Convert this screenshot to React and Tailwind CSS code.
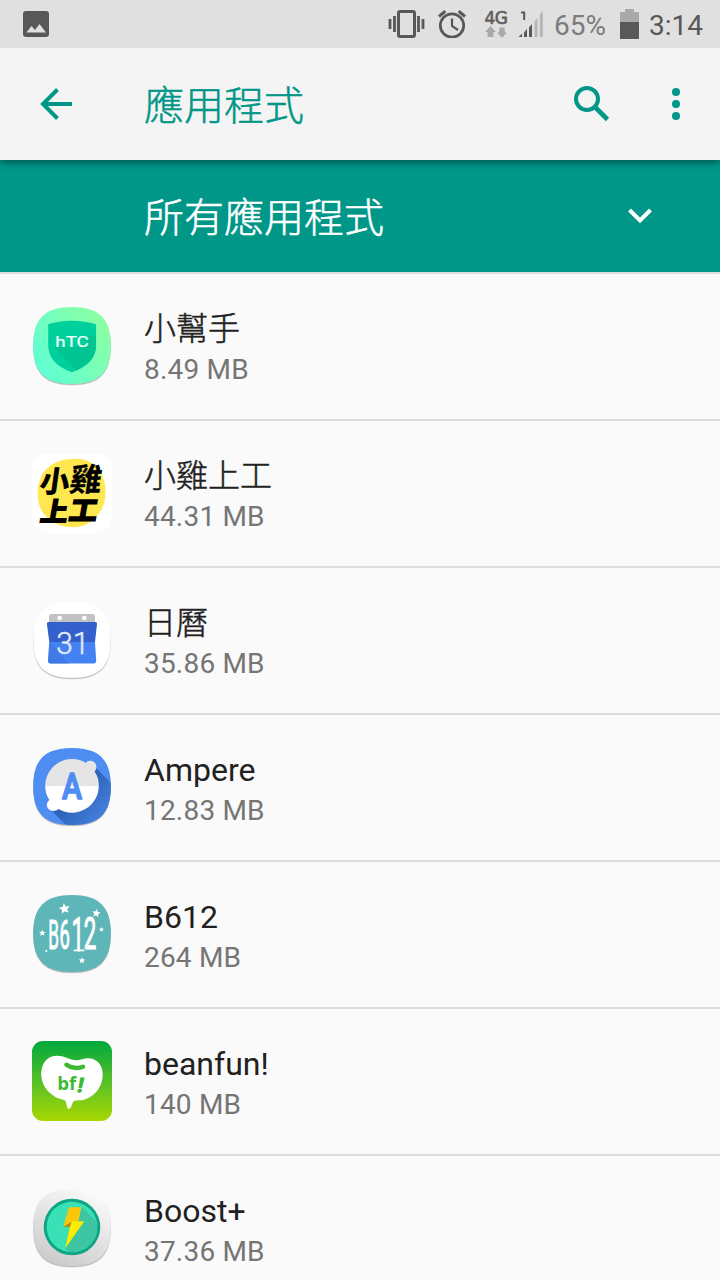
const SQUIRCLE = 'M40 1C67 1 78.8 12.5 78.8 39.5S67 78 40 78 1.2 66.5 1.2 39.5 13 1 40 1Z';
const STAR = 'M0-5 1.4-1.8 5-1.6 2.3.8 3.1 4.2 0 2.3-3.1 4.2-2.3.8-5-1.6-1.4-1.8Z';

function Squircle({ fill, children }) {
  return (
    <svg viewBox="0 0 80 80" className="h-20 w-20">
      <path d={SQUIRCLE} fill="#000" opacity="0.06" transform="translate(0 1.8)" />
      <path d={SQUIRCLE} fill="#000" opacity="0.22" transform="translate(0 .9)" />
      <path d={SQUIRCLE} fill={fill} />
      {children}
    </svg>
  );
}

function HelperIcon() {
  return (
    <Squircle fill="url(#helper)">
      <defs>
        <linearGradient id="helper" x1="0" y1=".85" x2="1" y2=".15">
          <stop offset="0" stopColor="#5cffd6" />
          <stop offset="1" stopColor="#8effa0" />
        </linearGradient>
        <clipPath id="shield">
          <path d="M39.8 14.7C48 14.7 57 16 64 18.2V39C64 53 54 61 39.8 66.3 25.6 61 16.2 53 16.2 39V18.2C23 16 31.5 14.7 39.8 14.7Z" />
        </clipPath>
      </defs>
      <g clipPath="url(#shield)">
        <path d="M10 10h60v60H10z" fill="#00d09c" />
        <path d="M22 41 50 70H70V30L56 30 56 41Z" fill="#00c492" />
      </g>
      <text x="23.3" y="41" textLength="33.5" lengthAdjust="spacingAndGlyphs" fill="#f2fffb" stroke="#f2fffb" strokeWidth=".2" className="font-[Roboto,sans-serif] text-[15px]">hTC</text>
    </Squircle>
  );
}

function ChickenIcon() {
  return (
    <svg viewBox="0 0 80 80" className="h-20 w-20">
      <rect width="80" height="80" rx="16" fill="#fff" />
      <path d="M40 6C52 5 64 9 70 22 75 34 75 48 68 59 61 70 50 75 39 74 25 74 13 66 8 54 4 42 5 29 12 19 19 10 29 6 40 6Z" fill="#ffe74f" />
      <g className="font-['Noto_Sans_CJK_TC',sans-serif] font-bold" fill="#000" stroke="#000" strokeWidth=".9">
        <text transform="translate(7 38.5) skewX(-8)" fontSize="29">小</text>
        <text transform="translate(36.5 38) skewX(-8)" fontSize="32" strokeWidth=".3">雞</text>
        <text transform="translate(7.5 67.5) skewX(-10) scale(1 .95)" fontSize="27" strokeWidth="2">上</text>
        <text transform="translate(36 67) skewX(-10) scale(1 .95)" fontSize="28" strokeWidth="2">工</text>
      </g>
    </svg>
  );
}

function CalendarIcon() {
  return (
    <Squircle fill="#fff">
      <path d="M17 23V17Q17 14 20 14H60Q63 14 63 17V23Z" fill="#c2c2c2" />
      <circle cx="27.7" cy="18" r="2.2" fill="#fff" />
      <circle cx="52.3" cy="18" r="2.2" fill="#fff" />
      <path d="M16.5 22H63.5Q65.3 22 65 24L63 42H17.3L14.9 24Q14.8 22 16.5 22Z" fill="#3460ce" />
      <path d="M17.3 42H63L64.2 61Q64.2 63.4 62 63.4H18Q16 63.4 16 61Z" fill="#4482f2" />
      <path d="M17.3 42 37 63.4H18Q16 63.4 16 61Z" fill="#3d74e0" opacity=".6" />
      <text x="24.3" y="53.5" textLength="33" lengthAdjust="spacingAndGlyphs" fill="#e3ebfa" stroke="#e3ebfa" strokeWidth=".5" className="font-[Roboto,sans-serif] text-[31px] font-light">31</text>
    </Squircle>
  );
}

function AmpereIcon() {
  return (
    <Squircle fill="#4e8df1">
      <defs>
        <linearGradient id="cast" x1=".4" y1=".4" x2=".88" y2=".8">
          <stop offset="0" stopColor="#2f65b8" />
          <stop offset="1" stopColor="#4c8aee" />
        </linearGradient>
        <clipPath id="ampere"><path d={SQUIRCLE} /></clipPath>
      </defs>
      <path d="M63 20 90 47V90H46L18 62 40 40Z" fill="url(#cast)" clipPath="url(#ampere)" />
      <path d="M13.2 39A26.8 26.8 0 0 1 54 16C55 13.5 60 13 62.5 15.5 65 18 65 22 62.5 24.5 66 29 66.8 34 66.8 39Z" fill="#e5e5e5" />
      <path d="M66.8 39A26.8 26.8 0 0 1 26.5 62C24 64.5 19 64.5 16.5 62 14 59.5 14.5 55 17.5 53 14.5 49 13.2 44 13.2 39Z" fill="#fff" />
      <text x="30" y="52.3" textLength="20" lengthAdjust="spacingAndGlyphs" fill="#4e8df1" stroke="#4e8df1" strokeWidth="1.6" strokeLinejoin="round" className="font-[Roboto,sans-serif] text-[37px] font-medium">A</text>
    </Squircle>
  );
}

function B612Icon() {
  return (
    <Squircle fill="#5eb6b9">
      <g fill="#fff" stroke="#fff" strokeWidth="1" strokeLinejoin="round" className="font-[Roboto,sans-serif] text-[40px]">
        <text transform="translate(16.3 54.5) scale(.43 1)">B</text>
        <text transform="translate(27.5 54.5) scale(.46 1)">6</text>
        <text transform="translate(39.5 56.5) scale(.56 1.2)">1</text>
        <text transform="translate(51.7 55.2) scale(.56 1.12)">2</text>
      </g>
      <path d="M42.5 56.4h9" stroke="#fff" strokeWidth="1.8" strokeLinecap="round" />
      <g fill="#fff">
        <path d={STAR} transform="translate(32.5 14.7) rotate(-8) scale(1.1)" />
        <path d={STAR} transform="translate(64.3 19.3) rotate(8) scale(.85)" />
        <path d={STAR} transform="translate(10.3 39) scale(.65)" />
        <path d={STAR} transform="translate(69.5 35.5) scale(.5)" />
        <path d={STAR} transform="translate(50 66.5) scale(.65)" />
        <circle cx="14.3" cy="57" r="1.1" />
      </g>
    </Squircle>
  );
}

function BeanfunIcon() {
  return (
    <svg viewBox="0 0 80 80" className="h-20 w-20">
      <defs>
        <linearGradient id="bean" x1="0" y1="0" x2="0" y2="1">
          <stop offset="0" stopColor="#00a83c" />
          <stop offset=".5" stopColor="#55c02a" />
          <stop offset="1" stopColor="#a9d800" />
        </linearGradient>
      </defs>
      <rect width="80" height="80" rx="11" fill="url(#bean)" />
      <path d="M24 14.8C32 14.5 37 18.5 43 19.3 48 19.8 51 17 57 17.2 66 18 71 25 70.7 34 70.5 47 61 57 50 59.3 45 59.5 42 59 40.5 62 39.5 65 38.5 68 36.5 68 34.5 67 34.8 61.5 33 59.5 31 58 27 58.5 22 55 14 50 9.3 42 9.2 33 9.5 22 15 15.5 24 14.8Z" fill="#fff" />
      <path d="M34.5 23.8C39 27.5 47 27.5 51 25.8" fill="none" stroke="#3cb933" strokeWidth="4.5" strokeLinecap="round" />
      <g fill="#3cb933" className="font-['Open_Sans',sans-serif] font-bold">
        <text x="25.3" y="49.2" textLength="19" lengthAdjust="spacingAndGlyphs" className="text-[17px]">bf</text>
        <text transform="translate(44.5 50.5) skewX(-12)" stroke="#3cb933" strokeWidth="1" className="text-[19.5px]">!</text>
      </g>
    </svg>
  );
}

function BoostIcon() {
  return (
    <Squircle fill="url(#boost)">
      <defs>
        <linearGradient id="boost" x1=".75" y1="0" x2=".25" y2="1">
          <stop offset="0" stopColor="#fbfbfb" />
          <stop offset="1" stopColor="#cacaca" />
        </linearGradient>
        <clipPath id="disc"><circle cx="40" cy="39" r="25" /></clipPath>
      </defs>
      <circle cx="40" cy="39" r="28.3" fill="#10a683" />
      <circle cx="40" cy="39" r="25.3" fill="#38e2b6" />
      <path d="M50 19 80 49V80H52L33 60 45 36Z" fill="#3ec5a1" clipPath="url(#disc)" />
      <path d="M31.3 38.7 40 33.3 38 39Z" fill="#b58a10" />
      <path d="M37 19.2H49.3L46.3 33.8H39.8L31.3 38.7Z" fill="#fdc60a" />
      <path d="M40 33.3H52.3L33.3 60.3 37.8 39Z" fill="#ffea00" />
    </Squircle>
  );
}

const apps = [
  { name: '小幫手', size: '8.49 MB', Icon: HelperIcon, cjk: true },
  { name: '小雞上工', size: '44.31 MB', Icon: ChickenIcon, cjk: true },
  { name: '日曆', size: '35.86 MB', Icon: CalendarIcon, cjk: true },
  { name: 'Ampere', size: '12.83 MB', Icon: AmpereIcon },
  { name: 'B612', size: '264 MB', Icon: B612Icon },
  { name: 'beanfun!', size: '140 MB', Icon: BeanfunIcon },
  { name: 'Boost+', size: '37.36 MB', Icon: BoostIcon },
];

function StatusBar() {
  return (
    <div className="relative z-20 flex h-12 shrink-0 items-center bg-[#e0e0e0] pr-[17px] pl-[23px] text-[#585858]">
      <svg viewBox="0 0 26 26" className="h-[26px] w-[26px]">
        <rect width="26" height="26" rx="3" fill="currentColor" />
        <path d="M3.5 21.5 8.5 15 12 19 16.5 13 23 21.5Z" fill="#e0e0e0" />
      </svg>
      <div className="ml-auto flex items-center">
        {/* Vibrate */}
        <svg viewBox="0 0 38 28" className="h-7 w-[38px]" fill="none" stroke="currentColor" strokeWidth="3">
          <rect x="10.5" y="1.5" width="16" height="25" rx="1.5" />
          <path d="M2 9V19M6.5 6V22M30.5 6V22M35 9V19" strokeWidth="2.8" />
        </svg>
        {/* Alarm */}
        <svg viewBox="0 0 28 28" className="ml-3 h-7 w-7" fill="none" stroke="currentColor" strokeWidth="2.7">
          <circle cx="14" cy="15.5" r="11.7" />
          <path d="M14 8.5V16L20 20" strokeWidth="2.2" />
          <path d="M1 6.5 7.3 1.2M27 6.5 20.7 1.2" strokeWidth="3" />
        </svg>
        {/* Mobile network */}
        <div className="ml-[18px] flex w-6 flex-col items-center pt-px">
          <span className="font-['DejaVu_Sans',sans-serif] text-[17px] leading-[15px] tracking-[-0.5px] [-webkit-text-stroke:0.7px_#686868]">4G</span>
          <svg viewBox="0 0 22 12" className="h-3 w-[22px]" fill="#a9a9a9">
            <path d="M5.5 0 11 6H8.5V11H2.5V6H0ZM17 12 12 6.5H14.3V1.5H19.7V6.5H22Z" />
          </svg>
        </div>
        <svg viewBox="0 0 26 28" className="ml-[10px] h-7 w-[26px]">
          <path d="M.5 27 4 23.5V27ZM6 22.5 9 19V27H6ZM11 17.5 14 14V27H11Z" fill="currentColor" />
          <path d="M16.5 11.5 19.5 8V27H16.5ZM21.8 4.500 24.800 1V27H21.800Z" fill="#b5b5b5" />
          <path d="M3 2.5H6.2V10" fill="none" stroke="currentColor" strokeWidth="2" />
        </svg>
        <span className="ml-[10px] w-[52px] pt-[3px] text-[28px] leading-none whitespace-nowrap text-[#7b7b7b]">65%</span>
        <svg viewBox="0 0 19 30" className="ml-[14px] h-[30px] w-[19px]">
          <path d="M0 3H5V0H14V3H19V14H0Z" fill="#a9a9a9" />
          <path d="M0 13H19V30H0Z" fill="currentColor" />
        </svg>
        <span className="ml-[10px] pt-[3px] text-[28px] leading-none">3:14</span>
      </div>
    </div>
  );
}

export default function App() {
  return (
    <div className="flex h-[1280px] w-[720px] flex-col overflow-hidden bg-[#fafafa] font-[Roboto,'Noto_Sans_CJK_TC',sans-serif]">
      <StatusBar />

      {/* Toolbar */}
      <header className="relative z-10 flex h-28 shrink-0 items-center bg-[#f4f4f4] pr-10 pl-10 text-[#009688] shadow-[0_2px_8px_rgba(0,0,0,0.45)]">
        <svg viewBox="0 0 32 32" className="h-8 w-8" fill="none" stroke="currentColor" strokeWidth="4">
          <path d="M32 16H3M17.5 1.5 3 16 17.5 30.5" />
        </svg>
        <h1 className="ml-[72px] flex-1 pt-[5px] text-[40px] leading-none font-light [-webkit-text-stroke:0.5px_currentColor]">應用程式</h1>
        <svg viewBox="0 0 40 40" className="h-10 w-10" fill="none" stroke="currentColor" strokeWidth="4">
          <circle cx="15" cy="15" r="11" />
          <path d="M23.5 23.5 35.5 35.5" strokeWidth="4.6" />
        </svg>
        <svg viewBox="0 0 8 32" className="ml-[60px] h-8 w-2" fill="currentColor">
          <circle cx="4" cy="4" r="4" />
          <circle cx="4" cy="16" r="4" />
          <circle cx="4" cy="28" r="4" />
        </svg>
      </header>

      {/* Filter */}
      <div className="flex h-28 shrink-0 items-center justify-between bg-[#009688] pr-[68px] pl-36 text-white">
        <span className="pt-[5px] text-[40px] leading-none font-light [-webkit-text-stroke:0.5px_currentColor]">所有應用程式</span>
        <svg viewBox="0 0 24 16" className="h-4 w-6" fill="none" stroke="currentColor" strokeWidth="4">
          <path d="M1.5 2 12 12.5 22.5 2" />
        </svg>
      </div>

      <ul className="shrink-0">
        {apps.map(({ name, size, Icon, cjk }) => (
          <li key={name} className="flex h-[147px] border-t-2 border-[#dcdcdc] px-8">
            <div className="pt-8">
              <Icon />
            </div>
            <div className="ml-8 pt-[35px]">
              <div className={`text-[32px] leading-10 text-[#212121] ${cjk ? 'font-light [-webkit-text-stroke:0.5px_#212121]' : ''}`}>
                {name}
              </div>
              <div className="mt-[3px] text-[28px] leading-9 tracking-[0.2px] text-[#757575]">{size}</div>
            </div>
          </li>
        ))}
      </ul>
    </div>
  );
}
